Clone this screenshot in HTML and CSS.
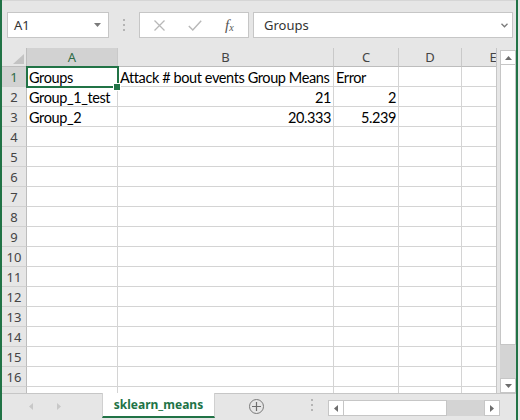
FILE: index.html
```html
<!DOCTYPE html>
<html>
<head>
<meta charset="utf-8">
<link rel="stylesheet" href="styles.css">
</head>
<body>
<div class="window">
  <div class="app">
    <div class="formula-bar">
      <div class="namebox"><span class="nb-text">A1</span><svg class="nb-drop" width="7" height="4" viewBox="0 0 7 4"><path d="M0 0H7L3.5 4Z" fill="#7a7a7a"/></svg></div>
      <div class="grip"><i></i><i></i><i></i></div>
      <div class="fx-buttons">
        <svg class="ic-x" width="11" height="11" viewBox="0 0 11 11"><path d="M0.5 0.5L10.5 10.5M10.5 0.5L0.5 10.5" stroke="#b8b8b8" stroke-width="1.3"/></svg>
        <svg class="ic-check" width="14" height="11" viewBox="0 0 14 11"><path d="M0.8 6L4.8 10L13.2 0.8" fill="none" stroke="#b8b8b8" stroke-width="1.4"/></svg>
        <span class="fx"><i>f</i><sub>x</sub></span>
      </div>
      <div class="formula-input"><span class="fi-text">Groups</span><svg class="fi-chev" width="7" height="5" viewBox="0 0 7 5"><path d="M0.5 0.8L3.5 3.8L6.5 0.8" fill="none" stroke="#7a7a7a" stroke-width="1.3"/></svg></div>
    </div>

    <div class="main">
      <div class="sheet">
        <div class="grid">
          <div class="corner"><svg width="11" height="10" viewBox="0 0 11 10"><path d="M11 0V10H0Z" fill="#c3c3c3"/></svg></div>
          <div class="h hsel">A</div><div class="h">B</div><div class="h">C</div><div class="h">D</div><div class="h">E</div>

          <div class="rh hsel">1</div><div class="c sel">Groups</div><div class="c">Attack # bout events Group Means</div><div class="c">Error</div><div class="c"></div><div class="c"></div>
          <div class="rh">2</div><div class="c">Group_1_test</div><div class="c num">21</div><div class="c num">2</div><div class="c"></div><div class="c"></div>
          <div class="rh">3</div><div class="c">Group_2</div><div class="c num">20.333</div><div class="c num">5.239</div><div class="c"></div><div class="c"></div>
          <div class="rh">4</div><div class="c"></div><div class="c"></div><div class="c"></div><div class="c"></div><div class="c"></div>
          <div class="rh">5</div><div class="c"></div><div class="c"></div><div class="c"></div><div class="c"></div><div class="c"></div>
          <div class="rh">6</div><div class="c"></div><div class="c"></div><div class="c"></div><div class="c"></div><div class="c"></div>
          <div class="rh">7</div><div class="c"></div><div class="c"></div><div class="c"></div><div class="c"></div><div class="c"></div>
          <div class="rh">8</div><div class="c"></div><div class="c"></div><div class="c"></div><div class="c"></div><div class="c"></div>
          <div class="rh">9</div><div class="c"></div><div class="c"></div><div class="c"></div><div class="c"></div><div class="c"></div>
          <div class="rh">10</div><div class="c"></div><div class="c"></div><div class="c"></div><div class="c"></div><div class="c"></div>
          <div class="rh">11</div><div class="c"></div><div class="c"></div><div class="c"></div><div class="c"></div><div class="c"></div>
          <div class="rh">12</div><div class="c"></div><div class="c"></div><div class="c"></div><div class="c"></div><div class="c"></div>
          <div class="rh">13</div><div class="c"></div><div class="c"></div><div class="c"></div><div class="c"></div><div class="c"></div>
          <div class="rh">14</div><div class="c"></div><div class="c"></div><div class="c"></div><div class="c"></div><div class="c"></div>
          <div class="rh">15</div><div class="c"></div><div class="c"></div><div class="c"></div><div class="c"></div><div class="c"></div>
          <div class="rh">16</div><div class="c"></div><div class="c"></div><div class="c"></div><div class="c"></div><div class="c"></div>
          <div class="rh"></div><div class="c"></div><div class="c"></div><div class="c"></div><div class="c"></div><div class="c"></div>
        </div>
      </div>
      <div class="vscroll">
        <div class="sb-btn"><svg width="7" height="4" viewBox="0 0 7 4"><path d="M0 4H7L3.5 0Z" fill="#6d6d6d"/></svg></div>
        <div class="v-thumb"></div>
        <div class="v-track"></div>
        <div class="sb-btn"><svg width="7" height="4" viewBox="0 0 7 4"><path d="M0 0H7L3.5 4Z" fill="#6d6d6d"/></svg></div>
      </div>
    </div>

    <div class="tabbar">
      <div class="tab-nav">
        <svg class="nav-l" width="4" height="7" viewBox="0 0 4 7"><path d="M4 0V7L0 3.5Z" fill="#c8c8c8"/></svg>
        <svg class="nav-r" width="4" height="7" viewBox="0 0 4 7"><path d="M0 0V7L4 3.5Z" fill="#c8c8c8"/></svg>
      </div>
      <div class="tab">sklearn_means</div>
      <div class="tab-rest">
        <div class="add-sheet"><svg width="9" height="9" viewBox="0 0 9 9"><path d="M4.5 0V9M0 4.5H9" stroke="#6d6d6d" stroke-width="1.2"/></svg></div>
        <div class="grip small"><i></i><i></i><i></i></div>
        <div class="hscroll">
          <div class="sb-btn h-btn"><svg width="4" height="7" viewBox="0 0 4 7"><path d="M4 0V7L0 3.5Z" fill="#6d6d6d"/></svg></div>
          <div class="h-thumb"></div>
          <div class="h-track"></div>
          <div class="sb-btn h-btn"><svg width="4" height="7" viewBox="0 0 4 7"><path d="M0 0V7L4 3.5Z" fill="#6d6d6d"/></svg></div>
        </div>
      </div>
    </div>
  </div>
</div>
</body>
</html>
```
FILE: styles.css
```css
* { box-sizing: border-box; margin: 0; padding: 0; }
html, body { width: 520px; height: 420px; overflow: hidden; background: #e6e6e6; }

.window {
  width: 520px; height: 420px;
  display: flex;
  background: #e6e6e6;
  border-left: 2px solid #217346;
}
.app {
  width: 516px; height: 420px;
  border-right: 2px solid #217346;
  display: flex; flex-direction: column;
}

/* formula bar */
.formula-bar {
  height: 48px; flex: none;
  display: flex; align-items: flex-start;
  padding-top: 11px;
  border-top: 1px solid #d6d6d6;
}
.namebox {
  margin-left: 5px; width: 102px; height: 26px;
  background: #fff; border: 1px solid #c6c6c6;
  display: flex; align-items: center; padding-left: 6px;
}
.nb-text { flex: 1; font: 13px "Noto Sans", sans-serif; color: #333; }
.nb-drop { margin-right: 7px; }

.grip {
  margin-left: 14px; width: 2px; height: 26px;
  display: flex; flex-direction: column; justify-content: center; gap: 3px;
}
.grip i { display: block; width: 2px; height: 2px; background: #b4b4b4; }

.fx-buttons {
  margin-left: 14px; width: 110px; height: 26px;
  background: #fff; border: 1px solid #c6c6c6;
  display: flex; align-items: center;
}
.ic-x { margin-left: 14px; }
.ic-check { margin-left: 23px; }
.fx {
  margin-left: 23px;
  font-family: "Liberation Serif", serif; color: #555;
  font-size: 15px; line-height: 1;
}
.fx i { font-style: italic; }
.fx sub { font-size: 10px; font-style: italic; vertical-align: -1px; }

.formula-input {
  margin-left: 4px; width: 260px; height: 26px;
  background: #fff; border: 1px solid #c6c6c6;
  display: flex; align-items: center; padding-left: 10px;
}
.fi-text { flex: 1; font: 13px "Noto Sans", sans-serif; color: #333; }
.fi-chev { margin-right: 4px; }

/* main grid area */
.main { height: 345px; flex: none; display: flex; }
.sheet {
  width: 495px; height: 345px; overflow: hidden;
  background: #fff; border-right: 1px solid #c6c6c6;
}
.grid {
  width: 523px;
  display: grid;
  grid-template-columns: 25px 91px 216px 65px 63px 63px;
  grid-template-rows: 19px;
  grid-auto-rows: 20px;
}
.grid > div {
  border-right: 1px solid #d4d4d4;
  border-bottom: 1px solid #d4d4d4;
  display: flex; white-space: nowrap;
}
.corner {
  background: #e6e6e6;
  border-right-color: #bdbdbd !important;
  border-bottom-color: #bdbdbd !important;
  justify-content: flex-end; align-items: flex-end;
  padding: 0 2px 2px 0;
}
.h {
  background: #e6e6e6;
  border-right-color: #c9c9c9 !important;
  border-bottom-color: #bdbdbd !important;
  justify-content: center; align-items: center;
  font: 13px "Noto Sans", sans-serif; color: #444;
}
.rh {
  background: #e6e6e6;
  border-right-color: #bdbdbd !important;
  border-bottom-color: #d0d0d0 !important;
  justify-content: center; align-items: center;
  font: 13px "Noto Sans", sans-serif; color: #444;
}
.hsel { background: #d2d2d2; color: #2f6b47; }
.c {
  align-items: flex-end;
  padding: 0 3px 0 2px;
  font: 14.5px/16px "Lato", sans-serif; color: #000;
  letter-spacing: -0.4px;
}
.num { justify-content: flex-end; padding-right: 2px; }
.sel {
  position: relative; z-index: 1;
  outline: 2px solid #217346; outline-offset: -1px;
}
.sel::after {
  content: ""; position: absolute;
  right: -3px; bottom: -4px; width: 6px; height: 6px;
  background: #217346; box-shadow: 0 0 0 1px #fff;
}

/* vertical scrollbar */
.vscroll {
  width: 16px; margin-left: 3px; padding-top: 2px;
  display: flex; flex-direction: column;
}
.sb-btn {
  flex: none; height: 15px;
  background: #fff; border: 1px solid #c6c6c6;
  display: flex; align-items: center; justify-content: center;
}
.v-thumb { flex: none; height: 280px; background: #fff; border: 1px solid #c6c6c6; border-top: none; }
.v-track { flex: 1; background: #d4d4d4; }

/* tab bar */
.tabbar { height: 27px; flex: none; display: flex; align-items: flex-start; }
.tab-nav {
  width: 100px; height: 27px;
  border-top: 1px solid #c6c6c6;
  display: flex; align-items: center; padding-bottom: 1px;
}
.nav-l { margin-left: 27px; }
.nav-r { margin-left: 24px; }
.tab {
  width: 113px; height: 25px;
  background: #fff;
  border-left: 1px solid #d0d0d0; border-right: 1px solid #d0d0d0;
  border-bottom: 2px solid #217346;
  display: flex; align-items: center; justify-content: center;
  font: bold 12px "Noto Sans", sans-serif; color: #217346;
}
.tab-rest {
  flex: 1; height: 27px;
  border-top: 1px solid #c6c6c6;
  display: flex; align-items: flex-start;
}
.add-sheet {
  margin-left: 34px; margin-top: 5px;
  width: 15px; height: 15px; border-radius: 50%;
  border: 1px solid #7a7a7a;
  display: flex; align-items: center; justify-content: center;
}
.grip.small { margin-left: 47px; margin-top: 5px; height: 12px; }
.hscroll {
  margin-left: 15px; margin-top: 6px;
  width: 172px; height: 16px;
  display: flex;
}
.h-btn { width: 16px; height: 16px; }
.h-thumb { width: 103px; height: 16px; background: #fff; border: 1px solid #c6c6c6; border-left: none; }
.h-track { flex: 1; background: #d4d4d4; }
```
